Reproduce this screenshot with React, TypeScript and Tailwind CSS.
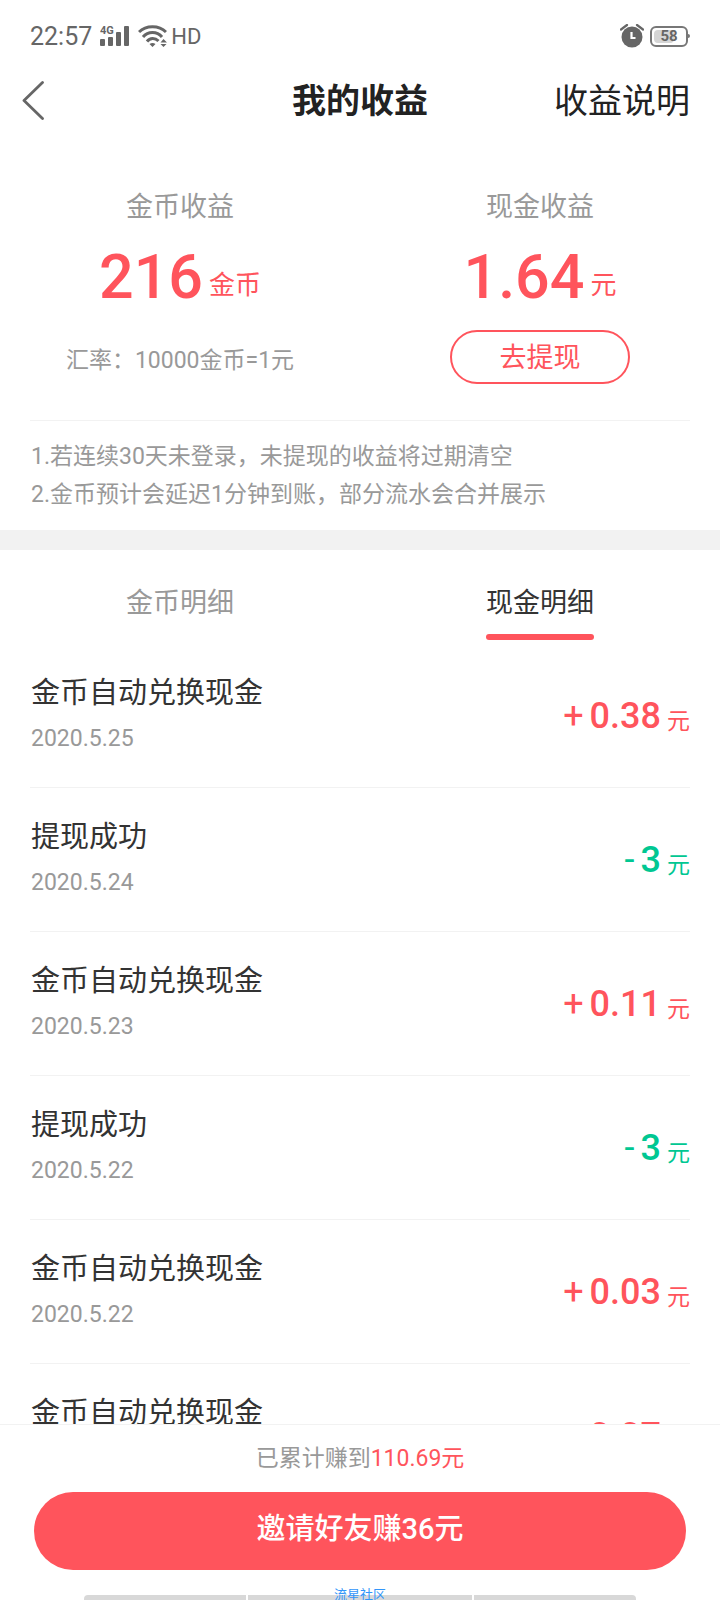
import { clsx } from 'clsx'

interface Entry {
  title: string
  date: string
  amount: string
  income: boolean
}

const entries: Entry[] = [
  { title: '金币自动兑换现金', date: '2020.5.25', amount: '0.38', income: true },
  { title: '提现成功', date: '2020.5.24', amount: '3', income: false },
  { title: '金币自动兑换现金', date: '2020.5.23', amount: '0.11', income: true },
  { title: '提现成功', date: '2020.5.22', amount: '3', income: false },
  { title: '金币自动兑换现金', date: '2020.5.22', amount: '0.03', income: true },
  { title: '金币自动兑换现金', date: '2020.5.21', amount: '0.07', income: true },
]

export default function App() {
  return (
    <div className="flex h-screen flex-col overflow-hidden bg-white font-['Roboto','Noto_Sans_CJK_SC',sans-serif] text-[#333]">
      <StatusBar />
      <Header />
      <Summary />
      <div className="h-5 shrink-0 bg-[#f2f2f2]" />
      <Tabs />
      <ul className="min-h-0 flex-1 overflow-y-auto px-[30px] [scrollbar-width:none]">
        {entries.map((entry, i) => (
          <EntryRow key={i} entry={entry} />
        ))}
      </ul>
      <Footer />
    </div>
  )
}

function StatusBar() {
  return (
    <div className="flex h-[72px] shrink-0 items-center justify-between px-[30px] text-[#666]">
      <div className="flex items-center gap-2">
        <span className="pt-0.5 text-[25px] leading-8">22:57</span>
        <SignalIcon />
        <div className="flex items-center gap-1">
          <WifiIcon />
          <span className="pt-0.5 text-[22px] leading-8">HD</span>
        </div>
      </div>
      <div className="flex items-center gap-1.5">
        <AlarmIcon />
        <Battery />
      </div>
    </div>
  )
}

function SignalIcon() {
  return (
    <svg width="30" height="24" viewBox="0 0 30 24" fill="currentColor" aria-hidden>
      <text x="0" y="10" fontSize="11" fontWeight="700">
        4G
      </text>
      <rect x="0" y="15" width="5" height="7" rx="1" />
      <rect x="8" y="13" width="5" height="9" rx="1" />
      <rect x="16" y="8" width="5" height="14" rx="1" />
      <rect x="24" y="2" width="5" height="20" rx="1" />
    </svg>
  )
}

function WifiIcon() {
  return (
    <svg width="29" height="24" viewBox="0 0 29 24" fill="none" aria-hidden>
      <g stroke="currentColor" strokeWidth="3">
        <path d="M1 8C8 1 21 1 28 8" />
        <path d="M5 13c5-6 14-6 19 0" />
        <path d="M9 17.500c3-4 8-4 11.500-.5" />
      </g>
      <path d="M11.500 20c2-1.500 4-1.500 6 0l-3 3zM25.500 15l3.500 3.500h-6.500zM25.500 23l3-3h-6z" fill="currentColor" />
    </svg>
  )
}

function AlarmIcon() {
  return (
    <svg width="24" height="24" viewBox="0 0 24 24" fill="none" aria-hidden>
      <circle cx="12" cy="13" r="10.500" fill="currentColor" />
      <path d="M1 5.500 7 1M23 5.500 17 1" stroke="currentColor" strokeWidth="2.200" strokeLinecap="round" />
      <path d="M11.500 8v6h4" stroke="#fff" strokeWidth="2.200" />
    </svg>
  )
}

function Battery() {
  return (
    <div className="flex items-center">
      <div className="relative flex h-[21px] w-[38px] items-center justify-center rounded-md border-2 border-[#777]">
        <div className="absolute inset-y-0.5 left-0.5 w-5 rounded-sm bg-[#d5d5d5]" />
        <span className="relative text-[15px] leading-4 font-bold">58</span>
      </div>
      <div className="h-1 w-0.5 rounded-r-sm bg-[#777]" />
    </div>
  )
}

function Header() {
  return (
    <header className="grid h-[58px] shrink-0 grid-cols-[1fr_auto_1fr] items-center px-[30px] text-[34px] leading-[44px] text-[#222]">
      <button type="button" aria-label="返回" className="-ml-2 justify-self-start text-[#666]">
        <svg width="23" height="40" viewBox="0 0 23 40" fill="none" aria-hidden>
          <path d="M20.500 1.500 2 19.500l18.500 18" stroke="currentColor" strokeWidth="2.800" strokeLinecap="round" strokeLinejoin="round" />
        </svg>
      </button>
      <h1 className="font-bold">我的收益</h1>
      <a href="#rules" className="justify-self-end">
        收益说明
      </a>
    </header>
  )
}

function Summary() {
  return (
    <section className="shrink-0 text-[#999]">
      <div className="grid grid-cols-2 pt-[57px] pb-9 text-center">
        <div className="flex flex-col items-center">
          <Balance label="金币收益" value="216" unit="金币" />
          <p className="mt-[15px] text-[23px] leading-8">汇率：10000金币=1元</p>
        </div>
        <div className="flex flex-col items-center">
          <Balance label="现金收益" value="1.64" unit="元" />
          <button
            type="button"
            className="h-[54px] w-[180px] rounded-full border-2 border-[#ff545c] pt-0.5 text-[27px] leading-9 text-[#ff545c]"
          >
            去提现
          </button>
        </div>
      </div>
      <div className="mx-[30px] border-t border-[#f2f2f2] pt-[17px] pb-4 pl-px text-[23px] leading-[38px]">
        <p>1.若连续30天未登录，未提现的收益将过期清空</p>
        <p>2.金币预计会延迟1分钟到账，部分流水会合并展示</p>
      </div>
    </section>
  )
}

function Balance({ label, value, unit }: { label: string; value: string; unit: string }) {
  return (
    <>
      <p className="text-[27px] leading-10">{label}</p>
      <p className="mt-1.5 mb-[9px] flex items-end gap-1.5 text-[#ff545c]">
        <span className="text-[61px] leading-[88px] font-medium">{value}</span>
        <span className="pb-4 text-[26px] leading-10">{unit}</span>
      </p>
    </>
  )
}

function Tabs() {
  return (
    <nav className="grid shrink-0 grid-cols-2 justify-items-center pt-[33px] pb-1 text-[27px] leading-10">
      <button type="button" className="border-b-[6px] border-transparent pb-[11px] text-[#999]">
        金币明细
      </button>
      <button type="button" className="flex flex-col gap-[11px]">
        <span>现金明细</span>
        <span className="h-1.5 w-full rounded-full bg-[#ff545c]" />
      </button>
    </nav>
  )
}

function EntryRow({ entry }: { entry: Entry }) {
  return (
    <li className="flex items-center justify-between border-b border-[#f2f2f2] pt-[29px] pb-[33px]">
      <div className="pl-px">
        <p className="text-[29px] leading-10">{entry.title}</p>
        <p className="mt-[11px] text-[23px] leading-[30px] text-[#999]">{entry.date}</p>
      </div>
      <p
        className={clsx(
          'flex items-end gap-1.5 pt-1 text-[36px] leading-10',
          entry.income ? 'text-[#ff545c]' : 'text-[#00c792]',
        )}
      >
        <span>{entry.income ? '+' : '-'}</span>
        <span className="font-medium">{entry.amount}</span>
        <span className="text-[23px] leading-7">元</span>
      </p>
    </li>
  )
}

function Footer() {
  return (
    <footer className="relative shrink-0 border-t border-[#f2f2f2] px-[34px] pt-4 text-center">
      <p className="text-[23px] leading-9 text-[#999]">
        已累计赚到<span className="text-[#ff545c]">110.69元</span>
      </p>
      <button
        type="button"
        className="mt-[15px] h-[78px] w-full rounded-full bg-[#ff545c] pb-1 text-[29px] leading-10 font-medium text-white"
      >
        邀请好友赚36元
      </button>
      <div className="mx-[50px] mt-[25px] grid h-[5px] grid-cols-[162fr_224fr_162fr] gap-0.5 overflow-hidden rounded-t-sm">
        <span className="bg-[#d8d8d8]" />
        <span className="bg-[#d8d8d8]" />
        <span className="bg-[#d8d8d8]" />
      </div>
      <span className="absolute inset-x-0 bottom-0 text-[13px] leading-[10px] text-[#3296fa]">流星社区</span>
    </footer>
  )
}
